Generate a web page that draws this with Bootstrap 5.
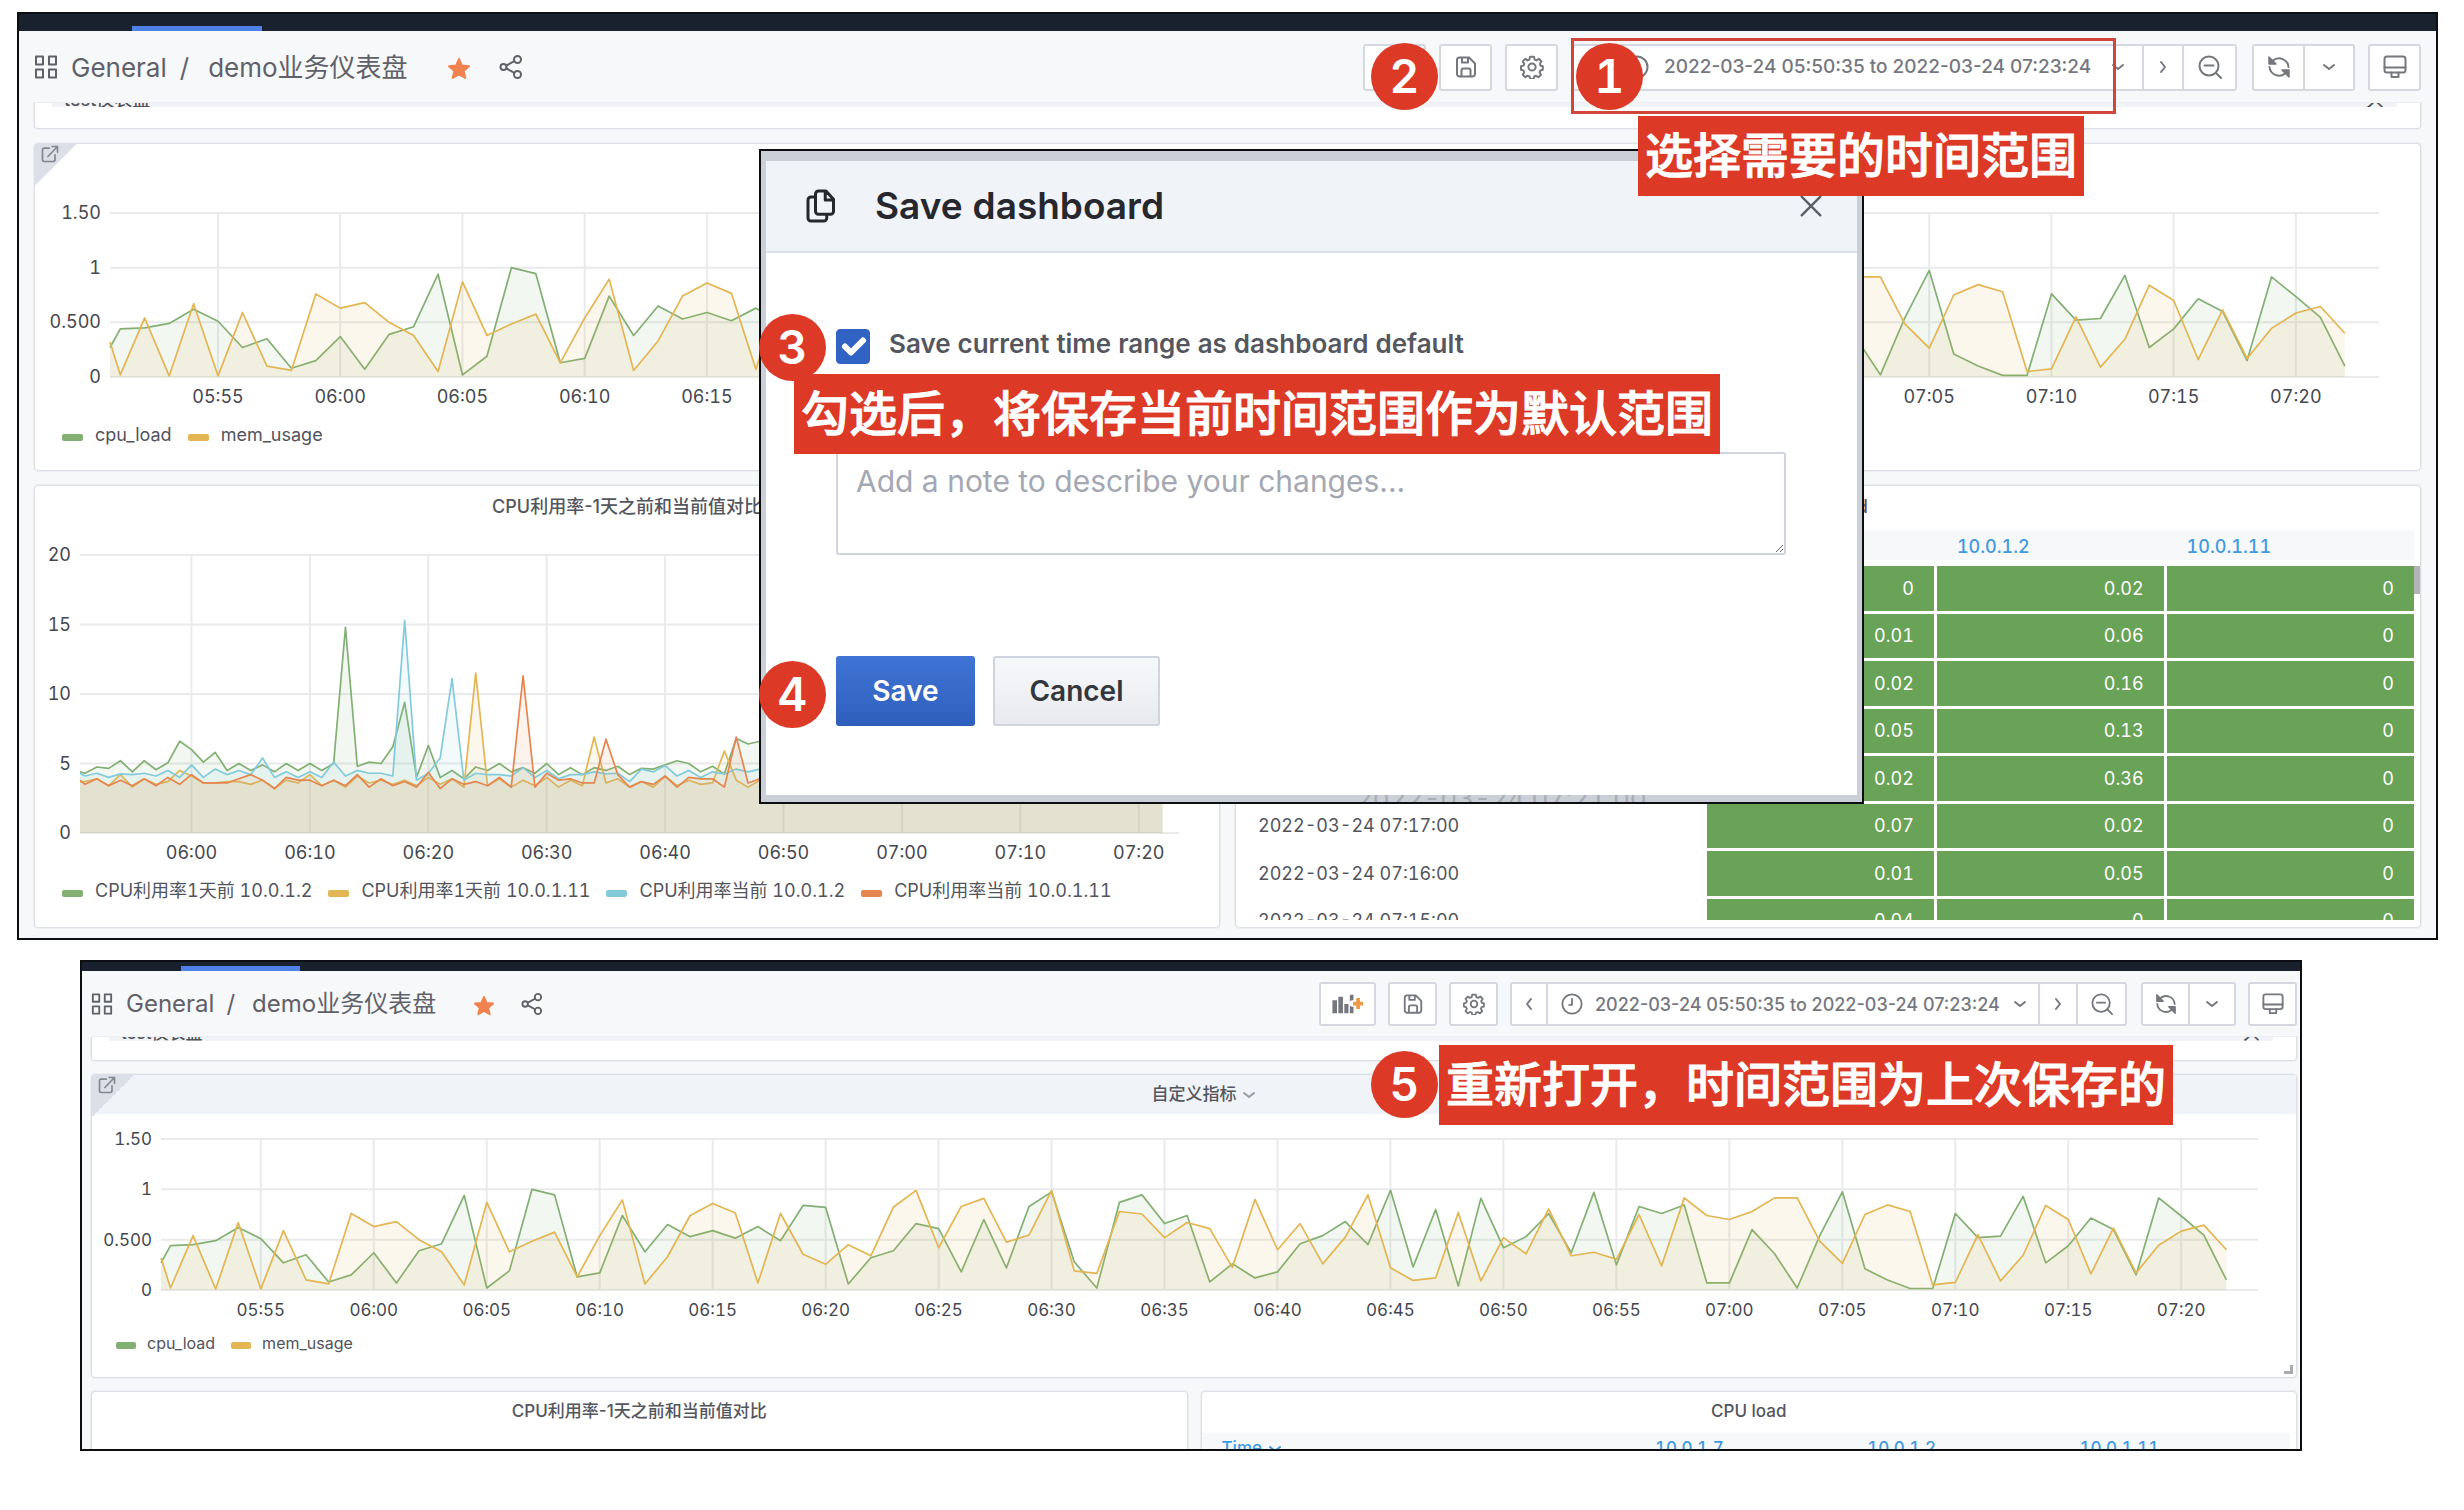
<!DOCTYPE html>
<html lang="zh-CN">
<head>
<meta charset="utf-8">
<meta name="viewport" content="width=device-width, initial-scale=1">
<title>demo业务仪表盘</title>
<link href="https://cdn.jsdelivr.net/npm/bootstrap@5.3.0/dist/css/bootstrap.min.css" rel="stylesheet">
<style>
body{font-family:Inter,"Noto Sans CJK SC",sans-serif;font-variant-numeric:tabular-nums;color:#52545c;background:#fff;padding:12px 26px 0 17px}
.shot{border:2px solid #0c0e12;background:#f7f8fa;overflow:hidden;position:relative;
  --fs:18px;--gap:14px;--head:40px;--bar:17px;--tools:72px;--btn:47px;--ic:24px;--crumb:26px;--lh:24px}
.shot-b{margin:20px 136px 0 63px;height:491px;
  --fs:17px;--gap:13px;--head:39px;--bar:9px;--tools:66px;--btn:44px;--ic:22px;--crumb:24px;--lh:22px}
.topbar{height:var(--bar);background:#19202e;padding-left:113px}
.topbar span{width:130px;height:5px;background:#4f82e8}
.shot-b .topbar{padding-left:99px}
.shot-b .topbar span{width:119px}
.tools{height:var(--tools);padding:0 15px}
.shot-b .tools{padding:0 3px 0 9px}
.board{padding:0 15px 10px}
.shot-b .board{padding:0 3px 0 9px}
.crumb{font-size:var(--crumb);color:#5f6169}
.crumb a{color:inherit;text-decoration:none}
.crumb-root{margin-left:13px}
.crumb-sep{margin:0 19px 0 13px}
.crumb-star{margin:3px 28px 0 39px;line-height:0}
.shot-b .crumb-sep{margin:0 17px 0 12px}
.shot-b .crumb-star{margin:3px 26px 0 37px}
.acts{gap:13px}
.shot-b .acts{gap:12px}
svg.ico{width:var(--ic);height:var(--ic);fill:none;stroke:currentColor;stroke-width:2;stroke-linecap:round;stroke-linejoin:round;flex:none}
svg.ico.wide{width:36px}
svg.chev{width:16px;height:16px}
.tb{height:var(--btn);width:53px;padding:0;background:#fff;border:2px solid #d5d8e1;border-radius:3px;color:#75777f;display:flex;align-items:center;justify-content:center;font-size:19px;font-weight:500;white-space:nowrap}
.shot-b .tb{width:49px}
.tb.slim{width:40px}
.shot-b .tb.slim{width:38px}
.tb.pick{width:50px}
.shot-b .tb.pick{width:46px}
.tb.add{width:63px}
.shot-b .tb.add{width:57px}
.tb.range{width:533px;padding:0 16px 0 14px;justify-content:flex-start;gap:15px}
.shot-b .tb.range{width:492px;padding:0 11px 0 13px;font-size:18px;gap:12px}
.fuse>.tb+.tb{border-left:0;border-top-left-radius:0;border-bottom-left-radius:0}
.fuse>.tb:not(:last-child){border-top-right-radius:0;border-bottom-right-radius:0}
.fuse+.fuse{margin-left:2px}
.panel{background:#fff;border:1px solid #dcdfe6;border-radius:4px;position:relative;margin-bottom:var(--gap);box-shadow:0 0 0 1px #eceef2}
.stub{height:26px;border-top:0;border-radius:0 0 4px 4px}
.shot-b .stub{height:24px}
.stub-strip{height:4px;overflow:hidden;background:#f1f3f8;margin:0 23px 0 17px;padding:0 13px 0 12px;font-size:var(--fs);line-height:15px;font-weight:500;align-items:flex-end}
.p-head{height:var(--head);font-size:var(--fs);font-weight:500;color:#54565e;font-variant-numeric:normal}
.p-head.lit{background:#f0f3f8;padding-left:20px}
.p-head .chev{color:#9a9ca3}
.corner{position:absolute;left:0;top:0;width:42px;height:42px;background:linear-gradient(135deg,#dbdfe7 50%,transparent 50%)}
.corner svg{position:absolute;left:5px;top:0;width:20px;height:20px;color:#85878f}
.grip{position:absolute;right:3px;bottom:3px;width:9px;height:9px;border:solid #a9acb4;border-width:0 3px 3px 0}
.plot{height:164px;margin:29px 41px 0 75px}
.plot-tall{height:278px;margin:29px 40px 0 45px}
.shot-b .plot{height:151px;margin:25px 38px 0 69px}
.plot svg,.plot-tall svg{display:block;overflow:visible}
.plot text,.plot-tall text{font-size:var(--fs);fill:#45474f}
.keys{margin-top:46px;padding-left:27px;font-size:var(--fs);line-height:var(--lh);gap:16px}
.keys i{width:21px;height:7px;border-radius:2px;margin-right:12px;position:relative;top:2px}
.shot-b .keys{margin-top:42px;padding-left:24px;font-size:16px}
.shot-b .keys i{width:20px;margin-right:11px}
.load{height:328px}
.shot-b .load{height:304px}
.duo{gap:15px}
.duo>.panel{flex:1 1 0;min-width:0;height:443px;margin-bottom:0}
.shot-b .duo{gap:13px}
.grid-box{margin-top:4px;height:390px;overflow:hidden;padding-right:6px;position:relative}
.grid-box::after{content:"";position:absolute;right:0;top:36px;width:6px;height:28px;background:#b3b3b5}
.shot-b .grid-box::after{content:none}
.shot-b .grid-box{margin-top:2px}
.grid-box table{width:100%;table-layout:fixed;border-collapse:separate;border-spacing:0;font-size:var(--fs);line-height:24px}
.grid-box th{background:#f7f8fa;border-bottom:6px solid #fff;height:36px;padding:3px 0 0 20px;font-weight:500;color:#3f9ae0}
.grid-box th:first-child,.grid-box td:first-child{padding-left:22px;width:40%}
.shot-b .grid-box th{padding:0 0 0 18px}
.shot-b .grid-box th:first-child{padding-left:20px}
.grid-box th:nth-child(2),.grid-box th:nth-child(3){width:19.5%}
.grid-box td{height:48px;padding:0 20px 0 0;border-bottom:3px solid #fff}
.grid-box tr:nth-child(even) td{height:47px}
.grid-box td+td{background:#69a357;color:#fff;text-align:right;border-right:3px solid #fff}
.grid-box td:last-child{border-right:0}
.dlg{position:absolute;left:740px;top:135px;width:1105px;border:2px solid #0c0e12;background:#cbcfd7;padding:10px 5px 0 5px}
.dlg-head{height:92px;background:#f0f3f8;border-bottom:2px solid #dde1e8;padding:0 32px 0 36px;color:#26282e}
.dlg-title{font-size:37px;font-weight:600;margin:0 0 0 37px}
.dlg-head .ico{width:36px;height:36px}
.dlg-x{border:0;background:none;padding:0;color:#5c5e66;line-height:0}
.dlg-head .dlg-x svg{width:28px;height:28px}
.dlg-main{background:#fff;padding:76px 71px 69px 70px}
.dlg-main .form-check-input{width:34px;height:35px;margin:0;border-radius:4px;flex:none}
.dlg-main .form-check-input:checked{background-color:#3163c4;border-color:#3163c4;background-size:40px}
.dlg-main label{font-size:26px;line-height:30px;font-weight:600;color:#55575f;margin-left:19px}
.dlg-main textarea{margin-top:88px;height:103px;border:2px solid #cfd4de;border-radius:3px;font-size:30px;line-height:34px;padding:10px 18px;color:#4b4d55}
.dlg-main textarea::placeholder{color:#a3a8b3}
.dlg-acts{margin-top:101px;gap:18px}
.dlg-acts .btn{height:70px;font-size:28px;font-weight:600;border-radius:3px;padding:0}
.go{width:139px;color:#fff;background:linear-gradient(#3f74d4,#2f5fbd);border:0}
.no{width:167px;color:#34363d;background:linear-gradient(#f7f8fa,#e8eaef);border:2px solid #cfd4de}
.dlg-foot{height:7px;overflow:hidden;font-size:26px;line-height:7px;color:#a9adb5;padding-left:590px}
.tip,.num,.frame{position:absolute;background:#dc3a26;color:#fff}
.tip{height:80px;padding:0 7px;font-size:48px;line-height:80px;font-weight:500;white-space:nowrap;-webkit-text-stroke:1px #fff}
.num{width:67px;height:67px;border-radius:50%;font-size:46px;line-height:67px;text-align:center;font-weight:600}
.frame{background:none;border:3px solid #d2453a;width:545px;height:76px;right:320px;top:24px}
.n1{right:793px;top:29px}.n2{right:998px;top:29px}.n3{left:740px;top:300px}.n4{left:740px;top:647px}
.t1{right:352px;top:102px}.t2{left:775px;top:360px}
.n5{left:1289px;top:89px}.t5{left:1357px;top:83px}
</style>
<script src="https://cdn.jsdelivr.net/npm/bootstrap@5.3.0/dist/js/bootstrap.bundle.min.js"></script>
</head>
<body>
<svg class="d-none" aria-hidden="true">
  <symbol id="apps" viewBox="0 0 24 24"><path d="M2 1.500h7v8H2zM15 1.500h7v8h-7zM2 14.500h7v8H2zM15 14.500h7v8h-7z"/></symbol>
  <symbol id="share" viewBox="0 0 24 24"><circle cx="4.500" cy="12" r="3"/><circle cx="18.500" cy="4.500" r="3.500"/><circle cx="18.500" cy="19.500" r="3.500"/><path d="M7.500 10.500 15.300 6.200M7.500 13.500l7.800 4.300"/></symbol>
  <symbol id="star" viewBox="0 0 24 24"><path fill="#f0824f" stroke="#f0824f" d="m12 2 2.900 6.600 7.100.7-5.400 4.700 1.700 7L12 17.500 5.700 21l1.700-7L2 9.300l7.100-.7z"/></symbol>
  <symbol id="save" viewBox="0 0 24 24"><path d="M5 2.500h10L21 8.500v10.500a2.500 2.500 0 0 1-2.500 2.500h-13A2.500 2.500 0 0 1 3 19V5a2.500 2.500 0 0 1 2-2.500zM8 2.500v5h6v-5M7.500 21v-5.500a2 2 0 0 1 2-2h5a2 2 0 0 1 2 2V21"/></symbol>
  <symbol id="gear" viewBox="0 0 24 24"><circle cx="12" cy="12" r="3.600"/><path d="M10 1.800h4l.6 2.800 1.900.8 2.400-1.600 2.500 2.700-1.500 2.300.7 1.900 2.200.6v3.500l-2.500.7-.8 1.800 1.500 2.400-2.600 2.500-2.400-1.400-1.800.7-.7 2.500h-3.300l-.7-2.500-1.900-.8-2.300 1.500-2.500-2.500 1.400-2.400-.8-1.900-2.400-.6v-3.500l2.500-.7.7-1.800-1.400-2.400 2.500-2.500L7.500 5.400l1.900-.8z"/></symbol>
  <symbol id="clock" viewBox="0 0 24 24"><circle cx="12" cy="12" r="10.500"/><path d="M12 6.500V13H9"/></symbol>
  <symbol id="zoomout" viewBox="0 0 24 24"><circle cx="11" cy="11" r="9.500"/><path d="m18 18 5 5M6.500 10.500h9"/></symbol>
  <symbol id="sync" viewBox="0 0 24 24"><path d="M6 5.500A9.500 9.500 0 0 1 21.500 12M18 18.500A9.500 9.500 0 0 1 2.500 12"/><path fill="currentColor" stroke-width="1.500" d="M2 2v7h7zM22 22v-7h-7z"/></symbol>
  <symbol id="screen" viewBox="0 0 24 24"><rect x="1.500" y="1.500" width="21" height="16" rx="2.500"/><path d="M1.500 12.500h21M8.500 17.500v4.500h7v-4.500"/></symbol>
  <symbol id="down" viewBox="0 0 16 16"><path d="m3 6 5 4 5-4"/></symbol>
  <symbol id="left" viewBox="0 0 16 16"><path d="M10 3 6 8l4 5"/></symbol>
  <symbol id="right" viewBox="0 0 16 16"><path d="m6 3 4 5-4 5"/></symbol>
  <symbol id="addpanel" viewBox="0 0 36 24"><path fill="#75777f" stroke="none" d="M1 8h5v14H1zM7.500 4h5v18h-5zM14 12h4.500v10H14zM20 2h4v20h-4z"/><path d="M29 5v13M23 11.500h12" stroke="#fff" stroke-width="7"/><path d="M29 5.500v12M23.500 11.500h11" stroke="#ee9a45" stroke-width="4" stroke-linecap="butt"/></symbol>
  <symbol id="ext" viewBox="0 0 24 24"><path d="M11 5H5a2 2 0 0 0-2 2v12a2 2 0 0 0 2 2h11a2 2 0 0 0 2-2v-6M9.500 15 21 3M14.500 3H21v7"/></symbol>
  <symbol id="copy" viewBox="0 0 24 24"><path d="M11 2h5l5 5.500v8a2 2 0 0 1-2 2h-8a2 2 0 0 1-2-2V4a2 2 0 0 1 2-2zM15.500 2v6H21M8.500 6H6a2 2 0 0 0-2 2v12a2 2 0 0 0 2 2h8.500a2 2 0 0 0 2-2v-2"/></symbol>
  <symbol id="cross" viewBox="0 0 24 24"><path d="m4 4 16 16M20 4 4 20"/></symbol>
</svg>

<main>
<section class="shot shot-a">
  <div class="topbar d-flex align-items-end"><span></span></div>
  <header class="tools d-flex align-items-center" data-tools></header>
  <div class="board">
    <div class="panel stub"><div class="stub-strip d-flex justify-content-between"><span>test仪表盘</span><span>只</span></div></div>
    <article class="panel load">
      <div class="p-head"></div>
      <div class="corner"><svg class="ico"><use href="#ext"/></svg></div>
      <div class="plot" data-chart="load"></div>
      <div class="keys d-flex" data-keys="load"></div>
    </article>
    <div class="duo d-flex">
      <article class="panel">
        <div class="p-head d-flex align-items-center justify-content-center">CPU利用率-1天之前和当前值对比</div>
        <div class="plot-tall" data-chart="cpu"></div>
        <div class="keys d-flex" data-keys="cpu"></div>
      </article>
      <article class="panel">
        <div class="p-head d-flex align-items-center justify-content-center">CPU load</div>
        <div class="grid-box"><table>
          <thead><tr><th>Time</th><th>10.0.1.7</th><th>10.0.1.2</th><th>10.0.1.11</th></tr></thead>
          <tbody>
            <tr><td>2022-03-24 07:22:00</td><td>0</td><td>0.02</td><td>0</td></tr>
            <tr><td>2022-03-24 07:21:00</td><td>0.01</td><td>0.06</td><td>0</td></tr>
            <tr><td>2022-03-24 07:20:00</td><td>0.02</td><td>0.16</td><td>0</td></tr>
            <tr><td>2022-03-24 07:19:00</td><td>0.05</td><td>0.13</td><td>0</td></tr>
            <tr><td>2022-03-24 07:18:00</td><td>0.02</td><td>0.36</td><td>0</td></tr>
            <tr><td>2022-03-24 07:17:00</td><td>0.07</td><td>0.02</td><td>0</td></tr>
            <tr><td>2022-03-24 07:16:00</td><td>0.01</td><td>0.05</td><td>0</td></tr>
            <tr><td>2022-03-24 07:15:00</td><td>0.04</td><td>0</td><td>0</td></tr>
          </tbody></table></div>
      </article>
    </div>
  </div>

  <form class="dlg" onsubmit="return false">
    <div class="dlg-head d-flex align-items-center">
      <svg class="ico"><use href="#copy"/></svg>
      <h2 class="dlg-title me-auto">Save dashboard</h2>
      <button type="button" class="dlg-x" aria-label="Close"><svg class="ico"><use href="#cross"/></svg></button>
    </div>
    <div class="dlg-main">
      <div class="d-flex align-items-start">
        <input class="form-check-input" type="checkbox" id="keep" checked>
        <label for="keep">Save current time range as dashboard default</label>
      </div>
      <textarea class="form-control" aria-label="Note" placeholder="Add a note to describe your changes..."></textarea>
      <div class="dlg-acts d-flex">
        <button type="submit" class="btn go">Save</button>
        <button type="button" class="btn no">Cancel</button>
      </div>
    </div>
    <div class="dlg-foot">2022-03-24 07:21:00</div>
  </form>

  <div class="frame"></div>
  <div class="num n1">1</div><div class="num n2">2</div>
  <div class="num n3">3</div><div class="num n4">4</div>
  <div class="tip t1">选择需要的时间范围</div>
  <div class="tip t2">勾选后，将保存当前时间范围作为默认范围</div>
</section>

<section class="shot shot-b">
  <div class="topbar d-flex align-items-end"><span></span></div>
  <header class="tools d-flex align-items-center" data-tools></header>
  <div class="board">
    <div class="panel stub"><div class="stub-strip d-flex justify-content-between"><span>test仪表盘</span><span>只</span></div></div>
    <article class="panel load">
      <div class="p-head lit d-flex align-items-center justify-content-center gap-1">自定义指标 <svg class="ico chev"><use href="#down"/></svg></div>
      <div class="corner"><svg class="ico"><use href="#ext"/></svg></div>
      <div class="plot" data-chart="load"></div>
      <div class="keys d-flex" data-keys="load"></div>
      <div class="grip"></div>
    </article>
    <div class="duo d-flex">
      <article class="panel">
        <div class="p-head d-flex align-items-center justify-content-center">CPU利用率-1天之前和当前值对比</div>
        <div class="plot-tall" data-chart="cpu"></div>
      </article>
      <article class="panel">
        <div class="p-head d-flex align-items-center justify-content-center">CPU load</div>
        <div class="grid-box"><table>
          <thead><tr><th>Time <svg class="ico chev"><use href="#down"/></svg></th><th>10.0.1.7</th><th>10.0.1.2</th><th>10.0.1.11</th></tr></thead>
        </table></div>
      </article>
    </div>
  </div>
  <div class="num n5">5</div>
  <div class="tip t5">重新打开，时间范围为上次保存的</div>
</section>
</main>

<script>
const ico = (n, c = '') => `<svg class="ico ${c}"><use href="#${n}"/></svg>`;
const tb = (n, label, c = '', ic = '') => `<button type="button" class="tb ${c}" aria-label="${label}">${ico(n, ic)}</button>`;
document.querySelectorAll('[data-tools]').forEach(el => {
  el.innerHTML = `
    <nav class="crumb d-flex align-items-center me-auto">
      ${ico('apps')}<a href="#" class="crumb-root">General</a><span class="crumb-sep">/</span><a href="#">demo业务仪表盘</a>
      <span class="crumb-star">${ico('star')}</span>${ico('share')}
    </nav>
    <div class="d-flex align-items-center acts">
      ${tb('addpanel', 'Add panel', 'add', 'wide')}${tb('save', 'Save dashboard')}${tb('gear', 'Settings')}
      <div class="d-flex fuse">${tb('left', 'Earlier', 'slim', 'chev')}
        <button type="button" class="tb range">${ico('clock')}<span>2022-03-24 05:50:35 to 2022-03-24 07:23:24</span>${ico('down', 'chev ms-auto')}</button>
        ${tb('right', 'Later', 'slim', 'chev')}${tb('zoomout', 'Zoom out')}</div>
      <div class="d-flex fuse">${tb('sync', 'Refresh')}${tb('down', 'Interval', 'pick', 'chev')}</div>
      ${tb('screen', 'Cycle view')}
    </div>`;
});

// One sample per minute; the first sits at the left edge (05:50:35), the next at 05:51.
const data = {
  load: { max: 1.5, ticks: [[1.5, '1.50'], [1, '1'], [.5, '0.500'], [0, '0']], step: 5, series: [
    ['cpu_load', '#82b072', [.27,.44,.45,.49,.62,.51,.27,.35,.08,.15,.37,.07,.39,.46,.94,.02,.19,1,.945,.13,.17,.74,.38,.65,.53,.59,.515,.63,.49,.84,.82,.06,.32,.39,.66,.61,.18,.7,.22,.83,.975,.28,.02,.87,.945,.66,.74,.08,.26,.12,.18,.46,.54,.68,.45,.99,.23,.8,.04,.91,.42,.53,.76,.37,.97,.25,.83,.76,.845,.07,.07,.6,.36,.02,.54,.975,.21,.1,.015,.015,.76,.52,.535,.93,.27,.44,.715,.6,.15,.915,.735,.545,.1]],
    ['mem_usage', '#e3b553', [.32,.02,.54,.01,.67,.01,.59,.1,.06,.76,.63,.68,.5,.38,.05,.87,.38,.485,.575,.13,.54,.895,.06,.33,.74,.86,.765,.07,.76,.355,.255,.45,.34,.825,.99,.42,.83,.91,.475,.545,.99,.19,.165,.78,.755,.52,.67,.61,.225,.9,.4,.66,.26,.525,.945,.22,.095,.12,.77,.09,.52,.36,.805,.34,.375,.305,.75,.24,.915,.74,.7,.78,.915,.915,.485,.265,.75,.845,.78,.05,.075,.55,.09,.345,.84,.7,.16,.615,.17,.445,.585,.645,.4]]] },
  cpu: { max: 20, ticks: [[20, '20'], [15, '15'], [10, '10'], [5, '5'], [0, '0']], step: 10, series: [
    ['CPU利用率1天前 10.0.1.2', '#82b072', [4.4,4.3,4.75,4.65,5.2,4.4,5.2,4.55,5.05,6.6,6,5.1,5.8,4.5,5,4.5,4.9,4.4,5,4.5,5,4.5,5,14.8,4.8,5.1,5,6.2,9.4,4,6.3,4,4.5,3.9,4.75,4.5,5,4.4,4.7,4.3,5,4.2,4.7,4.2,4.7,4.5,4.8,4.2,4.65,4.6,4.9,5.2,5,4.4,4.8,4.25,6.8,6.4,6.6]],
    ['CPU利用率1天前 10.0.1.11', '#e3b553', [3.7,3.7,3.9,3.4,4.2,3.3,3.9,3.5,3.7,4.5,4.1,3.6,3.6,3.7,3.7,3.5,3.8,3.2,3.8,3.6,4.2,3.4,3.8,3.3,4.1,3.6,3.8,3.5,3.8,3.4,4,3.5,3.9,3.3,11.5,3.4,3.9,3.3,3.8,3.4,4,3.3,3.8,3.4,6.9,3.6,3.9,3.3,3.7,3.3,4.1,3.4,3.8,3.5,3.6,5.9,3.8,3.3,3.8]],
    ['CPU利用率当前 10.0.1.2', '#83cbdb', [4.3,4.1,4.3,4,4.25,4.2,4.3,4.1,4.5,4,4.9,4,4.6,4.2,4.5,4.2,5.4,4,4.4,4,4.4,4,5.1,4.1,4.5,4.3,4.3,4.1,15.3,3.8,4.3,5.4,11.1,3.8,4.3,4.2,4.2,4.1,4.7,4,4.5,3.9,4.2,4.2,4.4,4.25,4.3,3.7,4.6,4.4,4.85,4.1,4.5,4,4.4,4.25,4.6,4.4,4.6]],
    ['CPU利用率当前 10.0.1.11', '#e58650', [3.8,3.5,3.9,3.4,3.8,3.4,3.9,3.4,4,3.5,4.2,3.6,3.6,3.6,3.9,4.2,3.8,3.2,4,3.8,3.8,3.4,3.8,3.4,4.2,3.3,3.9,3.4,3.7,3.3,4.35,3.2,3.9,3.5,3.7,3.4,4,3.3,11.3,3.3,4.3,3.8,3.9,3.6,3.6,6.75,4.2,3.3,3.7,3.5,4.1,3.3,4,3.9,3.9,3.3,6.9,3.6,3.9]]] }
};
const T0 = 35 / 60, T1 = 33 + 24 / 60 + 60, SPAN = T1 - T0;
document.querySelectorAll('[data-chart]').forEach(el => {
  const c = data[el.dataset.chart];
  let g = '', p = '';
  for (const [v, label] of c.ticks) {
    const y = (1 - v / c.max) * 100 + '%';
    g += `<line x1="0" x2="100%" y1="${y}" y2="${y}"/><text x="0" y="${y}" dx="-9" dy="6" text-anchor="end" stroke="none">${label}</text>`;
  }
  for (let m = c.step; m < T1; m += c.step) {
    const x = (m - T0) / SPAN * 100 + '%', t = 350 + m;
    const label = String(Math.floor(t / 60)).padStart(2, '0') + ':' + String(t % 60).padStart(2, '0');
    g += `<line x1="${x}" x2="${x}" y1="0" y2="100%"/><text x="${x}" y="100%" dy="26" text-anchor="middle" stroke="none">${label}</text>`;
  }
  for (const [, col, vals] of c.series) {
    const all = vals.slice();
    while (all.length < 93) all.push(vals[all.length % 20]);
    const pts = all.map((v, i) => `${i ? (i - T0).toFixed(2) : 0},${(c.max - v).toFixed(3)}`).join(' ');
    p += `<polygon points="0,${c.max} ${pts} ${(92 - T0).toFixed(2)},${c.max}" fill="${col}" fill-opacity=".1"/>
      <polyline points="${pts}" fill="none" stroke="${col}" stroke-width="1.700" vector-effect="non-scaling-stroke" stroke-linejoin="round"/>`;
  }
  el.innerHTML = `<svg width="100%" height="100%" role="img"><g stroke="#e9eaec" stroke-width="2">${g}</g>
    <svg viewBox="0 0 ${SPAN} ${c.max}" width="100%" height="100%" preserveAspectRatio="none">${p}</svg></svg>`;
});
document.querySelectorAll('[data-keys]').forEach(el => {
  el.innerHTML = data[el.dataset.keys].series.map(([n, col]) => `<span class="d-flex align-items-center"><i style="background:${col}"></i>${n}</span>`).join('');
});
</script>
</body>
</html>
